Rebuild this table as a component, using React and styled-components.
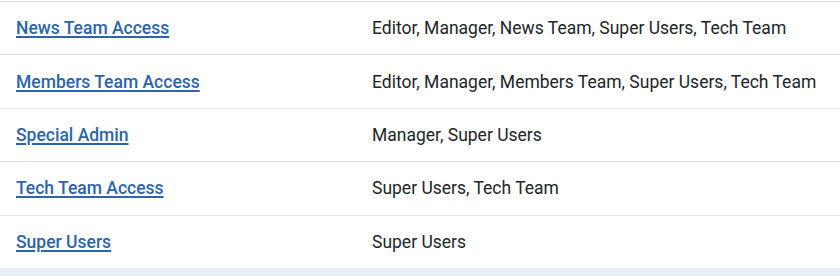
import React from "react";
import styled, { createGlobalStyle } from "styled-components";

const GlobalStyle = createGlobalStyle`
  html, body {
    margin: 0;
    padding: 0;
    background: #e9edf5;
  }
  body {
    font-family: Roboto, "Noto Sans", sans-serif;
    font-size: 17.5px;
    color: #22262a;
  }
`;

const TableWrapper = styled.div`
  background: #fff;
  padding-top: 1px;
`;

const Row = styled.div`
  display: grid;
  grid-template-columns: 356px 1fr;
  border-top: 1px solid #dfe3e7;
  height: 53.4px;
  box-sizing: border-box;
  align-items: center;
`;

const Cell = styled.div`
  padding: 0 16px;
  line-height: 26px;
  white-space: nowrap;
`;

const LevelLink = styled.a`
  color: #2c65ad;
  font-weight: 500;
  text-decoration: underline;
  text-decoration-thickness: 2px;
  text-underline-offset: 2px;
  cursor: pointer;
`;

const rows = [
  { level: "News Team Access", groups: "Editor, Manager, News Team, Super Users, Tech Team" },
  { level: "Members Team Access", groups: "Editor, Manager, Members Team, Super Users, Tech Team" },
  { level: "Special Admin", groups: "Manager, Super Users" },
  { level: "Tech Team Access", groups: "Super Users, Tech Team" },
  { level: "Super Users", groups: "Super Users" },
];

const App = () => (
  <>
    <GlobalStyle />
    <TableWrapper>
      {rows.map((r) => (
        <Row key={r.level}>
          <Cell>
            <LevelLink href="#">{r.level}</LevelLink>
          </Cell>
          <Cell>{r.groups}</Cell>
        </Row>
      ))}
    </TableWrapper>
  </>
);

export default App;
